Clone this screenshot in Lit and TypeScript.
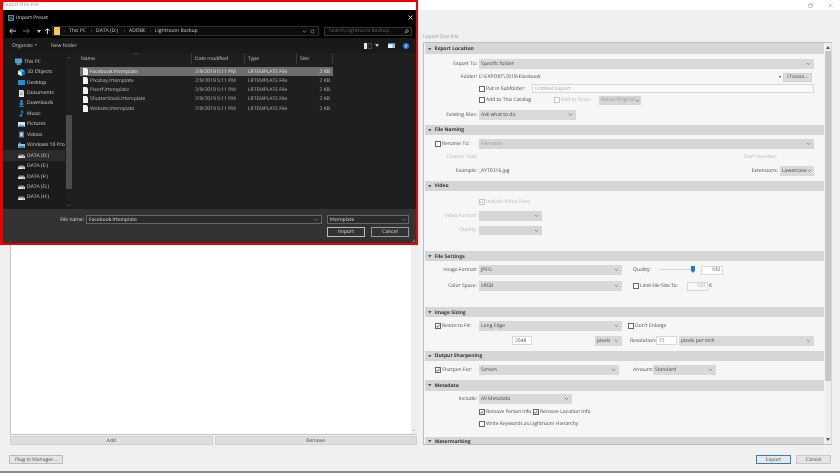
import { LitElement, html, css, svg } from "lit";
import { customElement } from "lit/decorators.js";

const chev = svg`<svg class="chev" viewBox="0 0 6 4"><path d="M1 1l2 2 2-2" fill="none" stroke="currentColor" stroke-width=".8"/></svg>`;
const tick = svg`<svg class="tk" viewBox="0 0 6 6"><path d="M.8 3l1.6 2L5.2 1" fill="none" stroke="currentColor" stroke-width="1.2"/></svg>`;
const tri = svg`<svg class="tri" viewBox="0 0 4 3"><path d="M0 0h4L2 3z" fill="#555"/></svg>`;

const sideIcons: Record<string, unknown> = {
  pc: svg`<rect x="0" y="0.5" width="7" height="4.5" fill="#4aa3df"/><rect x="1.5" y="5.5" width="4" height="1" fill="#cfe6f5"/>`,
  cube: svg`<path d="M3.5 0L7 1.7v3.6L3.5 7 0 5.3V1.7z" fill="#3fb4e8"/><path d="M3.5 3.4L7 1.7v3.6L3.5 7z" fill="#0f6fb4"/><path d="M0 1.7l3.5 1.7V7L0 5.3z" fill="#e6f4fb"/>`,
  desk: svg`<rect x="0" y="1" width="7" height="5" fill="#1f8fe0"/>`,
  doc: svg`<path d="M1 0h4l1 1.2V7H1z" fill="#dfe4e8"/><path d="M2 2.2h3M2 3.4h3M2 4.6h3" stroke="#7a8a96" stroke-width=".5"/>`,
  down: svg`<path d="M2.5 0h2v3.4H6L3.5 6 1 3.4h1.5z" fill="#2b93e6"/><path d="M1 6.5h5" stroke="#2b93e6" stroke-width=".8"/>`,
  music: svg`<path d="M3.4 0.3h.9c.2 1 1 1.4 1.5 2l-.5.4c-.3-.4-.6-.6-1-.8V5.6c0 .8-.7 1.2-1.5 1.2S1.4 6.4 1.4 5.7 2.2 4.6 3.4 4.8z" fill="#2b93e6"/>`,
  pic: svg`<rect x="0" y="1" width="7" height="5" fill="#cde3ee"/><path d="M0 6l2.4-2.6L4 5l1.2-1L7 6z" fill="#3b8fb8"/>`,
  vid: svg`<rect x="1" y="0.5" width="5" height="6" fill="#5677a8"/><rect x="2.3" y="1.6" width="2.4" height="3.8" fill="#c9d6e6"/>`,
  win: svg`<rect x="0" y="2" width="7" height="3.6" fill="#8cc7e6"/><rect x="0.8" y="4" width="5.4" height="1" fill="#2f7fae"/><rect x="0.6" y="0.5" width="2.4" height="1.8" fill="#2b93e6"/>`,
  drive: svg`<path d="M1 2.4h5l1 2H0z" fill="#8f979c"/><rect x="0" y="4.2" width="7" height="1.8" fill="#e6e8ea"/><rect x="5" y="4.8" width="1" height=".6" fill="#555"/>`,
};

const side = [
  ["This PC", "pc", "top"], ["3D Objects", "cube", ""], ["Desktop", "desk", ""], ["Documents", "doc", ""],
  ["Downloads", "down", ""], ["Music", "music", ""], ["Pictures", "pic", ""], ["Videos", "vid", ""],
  ["Windows 10 Pro", "win", ""], ["DATA (D:)", "drive", "sel"], ["DATA (E:)", "drive", ""],
  ["DATA (F:)", "drive", ""], ["DATA (G:)", "drive", ""], ["DATA (H:)", "drive", ""],
];
const files = ["Facebook", "Pixabay", "Pixerf", "ShutterStock", "Website"];

function chevSmall() {
  return html`<svg viewBox="0 0 6 4"><path d="M1 1l2 2 2-2" fill="none" stroke="currentColor" stroke-width=".8"/></svg>`;
}

@customElement("file-dialog")
class FileDialog extends LitElement {
  static styles = css`
    :host { display: flex; flex-direction: column; height: 100%; background: #000; color: #d2d2d2; font: 5px "Open Sans", sans-serif; text-rendering: geometricPrecision; position: relative; }
    svg { display: block; flex: none; }
    .title { height: 14px; display: flex; align-items: center; padding: 1px 3px 0 5px; box-sizing: border-box; gap: 2px; color: #ddd; }
    .title .grow { flex: 1; }
    .app { width: 6px; height: 6px; }
    .x { width: 5px; height: 5px; color: #e8e8e8; }
    .nav { height: 14px; display: flex; align-items: center; padding-left: 6px; }
    .nav .a { width: 7px; height: 6px; margin-right: 7px; color: #eee; }
    .nav .a.dim { color: #777; }
    .nav .a.up { margin-right: 0; }
    .nav .d { width: 4px; height: 3px; margin-right: 3px; color: #ccc; }
    .addr { margin-left: 1px; width: 267px; height: 10px; border: 1px solid #2e2e2e; box-sizing: border-box; display: flex; align-items: center; padding-left: 1px; background: #0c0c0c; }
    .folder { width: 6px; height: 8px; }
    .crumb { display: flex; align-items: center; color: #cfcfcf; white-space: nowrap; }
    .crumb i { font-style: normal; width: 9px; text-align: center; color: #777; font-size: 4.5px; }
    .crumb span { display: block; }
    .c1 { width: 18px; } .c2 { width: 24px; } .c3 { width: 17px; }
    .addr .grow { flex: 1; }
    .addr .small { width: 5px; height: 5px; margin-right: 3px; color: #aaa; }
    .search { margin-left: 5px; width: 88px; height: 9px; box-sizing: border-box; border: 1px solid #333; display: flex; align-items: center; justify-content: space-between; padding: 0 2px 0 4px; color: #666; background: #0c0c0c; }
    .search svg { width: 5px; height: 5px; color: #bbb; }
    .cmd { height: 15px; background: #191919; display: flex; align-items: center; padding: 0 7px 0 9px; color: #c8c8c8; }
    .cmd .org { display: flex; align-items: center; gap: 2px; width: 39px; }
    .cmd .org span { font-size: 3.5px; color: #bbb; }
    .cmd .grow { flex: 1; }
    .cmd .v1 { width: 8px; height: 6px; }
    .cmd .c { width: 4px; height: 3px; margin: 0 9px 0 3px; color: #ccc; }
    .cmd .v2 { width: 7px; height: 5px; margin-right: 8px; }
    .cmd .help { width: 6px; height: 6px; }
    .main { flex: none; height: 156px; display: flex; background: #1f1f1f; }
    .side { width: 62px; background: #1b1b1b; padding-top: 3.5px; box-sizing: border-box; }
    .row { height: 10.45px; display: flex; align-items: center; gap: 2px; padding-left: 15px; white-space: nowrap; overflow: hidden; }
    .row.top { padding-left: 12px; }
    .row.sel { background: #2c2c2c; }
    .row svg { width: 7px; height: 7px; }
    .sb { width: 7px; background: #1d1d1d; position: relative; display: flex; flex-direction: column; align-items: center; }
    .sb .ar { width: 4px; height: 3px; color: #666; margin-top: 3px; }
    .sb .thumb { width: 6px; height: 74px; background: #4b4b4b; margin-top: 56px; }
    .sb .ar2 { margin-top: 15px; }
    .files { flex: 1; padding-left: 8px; position: relative; }
    .grid { display: grid; grid-template-columns: 112px 53px 52px 36px; width: 253px; }
    .head { height: 14px; align-items: start; color: #c8c8c8; }
    .head div { height: 11px; display: flex; align-items: center; padding-left: 3px; border-right: 1px solid #3a3a3a; box-sizing: border-box; }
    .head div:first-child { padding-left: 1px; }
    .sort { position: absolute; left: 62px; top: -1px; width: 4px; height: 3px; color: #777; }
    .file { height: 9.25px; align-items: center; color: #bdbdbd; }
    .file > div { padding-left: 3px; white-space: nowrap; display: flex; align-items: center; gap: 2px; }
    .file svg { width: 5px; height: 7px; }
    .file .sz { justify-content: flex-end; padding: 0 3px 0 0; }
    .file.on { background: #6e6e6e; color: #e4e4e4; }
    .foot { flex: 1; background: #333; padding: 6px 7px 0 0; display: flex; flex-direction: column; gap: 3px; position: relative; }
    .fr { display: flex; align-items: center; height: 9px; }
    .fr label { width: 81px; text-align: right; margin-right: 2px; color: #ddd; }
    .inp { height: 9px; box-sizing: border-box; border: 1px solid #666; background: #2b2b2b; display: flex; align-items: center; padding-left: 2px; color: #ddd; }
    .inp svg { width: 5px; height: 3px; margin-left: auto; margin-right: 2px; color: #999; }
    .i1 { width: 236px; margin-right: 5px; }
    .i2 { width: 82px; }
    .btns { display: flex; justify-content: flex-end; gap: 6px; }
    .btn { width: 38px; height: 10px; box-sizing: border-box; border: 1px solid #bdbdbd; background: #333; color: #ddd; display: flex; align-items: center; justify-content: center; }
    .btn.alt { border-color: #999; }
    .grip { position: absolute; right: 1px; bottom: 1px; width: 3px; height: 3px; color: #777; }
  `;
  render() {
    const fileIcon = html`<svg viewBox="0 0 5 7"><path d="M0 0h3.6L5 1.4V7H0z" fill="#f2f2f2"/></svg>`;
    return html`
      <div class="title">
        <svg class="app" viewBox="0 0 6 6"><rect x=".4" y=".4" width="5.2" height="5.2" fill="#14303f" stroke="#7fb7d6" stroke-width=".7"/><path d="M1.5 4.4L3 2.6l1.5 1.8" fill="none" stroke="#9fd0ea" stroke-width=".5"/></svg>
        <span>Import Preset</span><span class="grow"></span>
        <svg class="x" viewBox="0 0 5 5"><path d="M.5.5l4 4m0-4l-4 4" stroke="currentColor" stroke-width=".9"/></svg>
      </div>
      <div class="nav">
        <svg class="a" viewBox="0 0 7 6"><path d="M7 3H1m2-2.4L.8 3 3 5.4" fill="none" stroke="currentColor" stroke-width=".9"/></svg>
        <svg class="a dim" viewBox="0 0 7 6"><path d="M0 3h6M4 .6L6.2 3 4 5.4" fill="none" stroke="currentColor" stroke-width=".9"/></svg>
        <svg class="d" viewBox="0 0 4 3"><path d="M0 0h4L2 3z" fill="currentColor"/></svg>
        <svg class="a up" viewBox="0 0 7 6"><path d="M3.5 6V1M1.2 3l2.3-2.4L5.8 3" fill="none" stroke="currentColor" stroke-width=".9"/></svg>
        <div class="addr">
          <svg class="folder" viewBox="0 0 6 8"><path d="M0 0h6v8H0z" fill="#f5c94c"/></svg>
          <span class="crumb"><i>›</i><span class="c1">This PC</span><i>›</i><span class="c2">DATA (D:)</span><i>›</i><span class="c3">ADOBE</span><i>›</i><span>Lightroom Backup</span></span>
          <span class="grow"></span>
          <svg class="small" viewBox="0 0 6 4"><path d="M1 1l2 2 2-2" fill="none" stroke="currentColor" stroke-width=".8"/></svg>
          <svg class="small" viewBox="0 0 6 6"><path d="M5 3a2 2 0 1 1-.7-1.5M4.6.6v1.2H3.4" fill="none" stroke="currentColor" stroke-width=".6"/></svg>
        </div>
        <div class="search"><span>Search Lightroom Backup</span>
          <svg viewBox="0 0 6 6"><circle cx="3.6" cy="2.4" r="1.6" fill="none" stroke="currentColor" stroke-width=".7"/><path d="M2.4 3.6L.6 5.4" stroke="currentColor" stroke-width=".8"/></svg></div>
      </div>
      <div class="cmd">
        <span class="org">Organize <span>▾</span></span><span>New folder</span><span class="grow"></span>
        <svg class="v1" viewBox="0 0 8 6"><rect width="3" height="6" fill="#e8e8e8"/><rect x="4" y=".5" width="3.5" height="5" fill="none" stroke="#666" stroke-width=".6"/></svg>
        <svg class="c" viewBox="0 0 4 3"><path d="M0 0h4L2 3z" fill="currentColor"/></svg>
        <svg class="v2" viewBox="0 0 7 5"><rect width="7" height="5" fill="#e8f2fa"/><rect width="7" height="1.2" fill="#3c8ed0"/><rect x="4.3" y="1.2" width="2.7" height="3.8" fill="#8fc0e8"/></svg>
        <svg class="help" viewBox="0 0 6 6"><circle cx="3" cy="3" r="3" fill="#1c7ee0"/><text x="3" y="4.6" font-size="4.4" font-family="Open Sans" font-weight="700" text-anchor="middle" fill="#fff">?</text></svg>
      </div>
      <div class="main">
        <div class="side">
          ${side.map(([n, ic, c]) => html`<div class="row ${c}"><svg viewBox="0 0 7 7">${sideIcons[ic]}</svg><span>${n}</span></div>`)}
        </div>
        <div class="sb">
          <svg class="ar" viewBox="0 0 4 3"><path d="M.5 2.5L2 1l1.5 1.5" fill="none" stroke="currentColor" stroke-width=".7"/></svg>
          <div class="thumb"></div>
          <svg class="ar ar2" viewBox="0 0 4 3"><path d="M.5.5L2 2 3.5.5" fill="none" stroke="currentColor" stroke-width=".7"/></svg>
        </div>
        <div class="files">
          <svg class="sort" viewBox="0 0 4 3"><path d="M.5 2.5L2 1l1.5 1.5" fill="none" stroke="currentColor" stroke-width=".6"/></svg>
          <div class="grid head"><div>Name</div><div>Date modified</div><div>Type</div><div>Size</div></div>
          ${files.map((f, i) => html`<div class="grid file ${i === 0 ? "on" : ""}">
            <div>${fileIcon}<span>${f}.lrtemplate</span></div><div>2/9/2019 5:11 PM</div><div>LRTEMPLATE File</div><div class="sz">2 KB</div></div>`)}
        </div>
      </div>
      <div class="foot">
        <div class="fr"><label>File name:</label>
          <div class="inp i1">Facebook.lrtemplate${chevSmall()}</div>
          <div class="inp i2">lrtemplate${chevSmall()}</div></div>
        <div class="btns"><div class="btn">Import</div><div class="btn alt">Cancel</div></div>
        <svg class="grip" viewBox="0 0 3 3"><path d="M3 0v3H0z" fill="currentColor"/></svg>
      </div>`;
  }
}

@customElement("app-root")
class AppRoot extends LitElement {
  static styles = css`
    :host { display: block; width: 840px; height: 473px; }
    .page { width: 840px; height: 473px; position: relative; overflow: hidden; display: flex; flex-direction: column; background: #f0f0f0; color: #4a4a4a; font: 5px "Open Sans", sans-serif; text-rendering: geometricPrecision; filter: blur(.3px); }
    svg { display: block; flex: none; }
    .bar { height: 10px; background: #fff; display: flex; align-items: center; padding: 0 7px 0 3px; color: #999; flex: none; }
    .bar .grow { flex: 1; }
    .bar svg { width: 5px; height: 5px; margin-left: 15px; color: #999; }
    .body { flex: 1; display: flex; min-height: 0; }
    .left { width: 423px; flex: none; box-sizing: border-box; padding: 30px 6px 0 10px; display: flex; flex-direction: column; }
    .list { height: 394px; flex: none; display: flex; background: #fff; border-left: 1px solid #c4c4c4; border-bottom: 1px solid #c4c4c4; }
    .list .in { flex: 1; }
    .list .lsb { width: 6px; background: #ededed; display: flex; flex-direction: column; justify-content: flex-end; align-items: center; padding-bottom: 2px; color: #aaa; }
    .list .lsb svg { width: 4px; height: 3px; }
    .ar { display: flex; gap: 2px; margin-top: 1px; }
    .ar div { flex: 1; height: 9px; background: #dedede; border: 1px solid #d0d0d0; box-sizing: border-box; display: flex; align-items: center; justify-content: center; color: #444; }
    .plug { margin: 10px 0 0 -1px; width: 54px; height: 9px; box-sizing: border-box; border: 1px solid #bcbcbc; background: #e4e4e4; display: flex; align-items: center; justify-content: center; }
    .right { flex: 1; display: flex; flex-direction: column; padding-right: 8px; }
    .cap { height: 32px; box-sizing: border-box; padding-top: 24px; color: #999; white-space: nowrap; }
    .panel { height: 403px; flex: none; box-sizing: border-box; border: 1px solid #bdbdbd; border-right-color: #d6d6d6; display: flex; background: #f6f6f6; overflow: hidden; }
    .content { width: 399px; flex: none; margin-left: 1px; }
    .vsb { flex: 1; margin-left: 1px; display: flex; flex-direction: column; align-items: center; background: #eeeeee; color: #555; }
    .vsb svg { width: 4px; height: 3px; margin-top: 3px; }
    .vsb .th { width: 100%; height: 330px; background: #c6c6c6; margin-top: 2px; }
    .vsb .g { flex: 1; }
    .vsb .last { margin: 0 0 3px; }
    .hd { height: 11px; box-sizing: border-box; padding: 1px 0 0 3px; background: #d6d6d6; display: flex; align-items: center; gap: 3px; font-weight: 700; color: #333; margin-top: 5px; }
    .hd.first { margin-top: 0; }
    .hd.n10 { height: 10px; }
    .hd.n9 { height: 9px; }
    .hd .tri { width: 3.5px; height: 2.6px; }
    .r { display: flex; align-items: center; height: 9.5px; padding-right: 10px; white-space: nowrap; }
    .h10 { height: 10px; }
    .m2 { margin-top: 2px; } .m3 { margin-top: 3px; } .m4 { margin-top: 4px; } .m5 { margin-top: 5px; } .m6 { margin-top: 6px; } .m7 { margin-top: 7px; } .m8 { margin-top: 8px; } .m16 { margin-top: 16px; }
    .lb { width: 52px; flex: none; margin-right: 2px; text-align: right; }
    .lb.cl { box-sizing: border-box; padding-left: 10px; }
    .dim { color: #b8b8b8; }
    .sel { height: 100%; box-sizing: border-box; background: #d9d9d9; display: flex; align-items: center; padding: 0 2px; color: #444; flex: none; }
    .sel .chev { width: 5px; height: 3.4px; margin-left: auto; margin-right: 1px; color: #666; }
    .sel.off { color: #9a9a9a; background: #d6d6d6; }
    .fill { flex: 1; }
    .w335 { width: 335px; } .w97 { width: 97px; } .w34 { width: 34px; } .w63 { width: 63px; } .w143 { width: 143px; }
    .w27 { width: 27px; } .w135 { width: 135px; } .w140 { width: 140px; } .w93 { width: 93px; } .w42 { width: 42px; }
    .tb { height: 9px; box-sizing: border-box; background: #fff; border: 1px solid #d8d8d8; display: flex; align-items: center; padding: 0 2px; color: #555; flex: none; }
    .tb.fill { flex: 1; }
    .tb.end { justify-content: flex-end; }
    .tb.g { color: #aaa; background: #f9f9f9; }
    .tb20 { width: 20px; } .tb21 { width: 21px; } .tb22 { width: 22px; }
    .ck { width: 6px; height: 6px; box-sizing: border-box; border: .7px solid #666; background: #fff; color: #444; flex: none; display: inline-block; }
    .ck.off { border-color: #c6c6c6; color: #aaa; }
    .ck .tk { width: 100%; height: 100%; }
    .cl { display: flex; align-items: center; gap: 1px; flex: none; }
    .cw53 { width: 53px; } .cw54 { width: 54px; letter-spacing: -.1px; } .cw75 { width: 75px; } .cw45 { width: 45px; }
    .ml6 { margin-left: 6px; } .ml11 { margin-left: 11px; }
    .choose { width: 29px; height: 9px; background: #dcdcdc; border: 1px solid #cfcfcf; box-sizing: border-box; display: flex; align-items: center; justify-content: center; margin-right: 2px; flex: none; }
    .dd { font-size: 4px; margin-right: 2px; color: #333; }
    .foot { flex: 1; display: flex; justify-content: flex-end; gap: 5px; padding: 10px 1px 0 0; }
    .fb { width: 35px; height: 9px; box-sizing: border-box; border: 1px solid #c8c8c8; background: #e4e4e4; display: flex; align-items: center; justify-content: center; }
    .fb.pri { border-color: #2f7fd0; background: #e8e8e8; }
    .line { height: 2px; background: #8b8b8b; flex: none; }
    .startno { margin-right: 37px; }
    .ext { margin-right: 2px; }
    .qlabel { margin-left: 11px; width: 18px; }
    .slider { width: 38px; margin: 0 4px 0 8px; height: 9px; position: relative; flex: none; }
    .slider::before { content: ""; position: absolute; left: 0; right: 3px; top: 3.5px; height: 1px; background: #d2d2d2; }
    .knob { position: absolute; right: 2px; top: 0; width: 4px; height: 7px; }
    .k { margin-left: 1px; }
    .sp33 { width: 33px; } .sp63 { width: 63px; } .sp2 { width: 2px; }
    .reslabel { margin-left: 8px; width: 26px; }
    .amlabel { margin-left: 14px; width: 20px; }
    .frame { position: absolute; left: 0; top: 0; width: 418px; height: 245px; box-sizing: border-box; border: solid #f10000; border-width: 2px 2px 2px 3px; padding-top: 8px; }
    .frame file-dialog { height: 233px; }
  `;
  ck(on = false, off = false) {
    return html`<span class="ck ${off ? "off" : ""}">${on ? tick : ""}</span>`;
  }
  sel(t: string, w: string, off = false) {
    return html`<span class="sel ${w} ${off ? "off" : ""}"><span>${t}</span>${chev}</span>`;
  }
  hd(t: string, c = "") {
    return html`<div class="hd ${c}">${tri}<span>${t}</span></div>`;
  }
  lbl(t: string) {
    return html`<span class="lb">${t}</span>`;
  }
  render() {
    return html`<div class="page">
      <div class="bar"><span>Export One File</span><span class="grow"></span>
        <svg viewBox="0 0 5 5"><path d="M.5 1.5h3v3h-3zM1.5 1.5v-1h3v3h-1" fill="none" stroke="currentColor" stroke-width=".5"/></svg>
        <svg viewBox="0 0 5 5"><path d="M.5.5l4 4m0-4l-4 4" stroke="currentColor" stroke-width=".5"/></svg>
      </div>
      <div class="body">
        <div class="left">
          <div class="list"><div class="in"></div><div class="lsb"><svg viewBox="0 0 4 3"><path d="M.5.5L2 2 3.5.5" fill="none" stroke="currentColor" stroke-width=".6"/></svg></div></div>
          <div class="ar"><div>Add</div><div>Remove</div></div>
          <div class="plug">Plug-in Manager...</div>
        </div>
        <div class="right">
          <div class="cap">Export One File</div>
          <div class="panel">
            <div class="content">
              ${this.hd("Export Location", "first")}
              <div class="r m5">${this.lbl("Export To:")}${this.sel("Specific folder", "w335")}</div>
              <div class="r m4"><span class="lb">Folder:</span><span>E:\\EXPORT\\2019\\Facebook</span><span class="fill"></span><span class="dd">▾</span><span class="choose">Choose...</span></div>
              <div class="r m2"><span class="lb"></span><span class="cl cw53">${this.ck()}Put in Subfolder:</span><span class="tb g fill">Untitled Export</span></div>
              <div class="r m2"><span class="lb"></span><span class="cl cw75">${this.ck()}Add to This Catalog</span><span class="cl dim cw45">${this.ck(false, true)}Add to Stack:</span>${this.sel("Below Original", "w42", true)}</div>
              <div class="r m5">${this.lbl("Existing Files:")}${this.sel("Ask what to do", "w97")}</div>
              ${this.hd("File Naming", "n10")}
              <div class="r h10 m4"><span class="lb cl">${this.ck()}Rename To:</span>${this.sel("Filename", "w335", true)}</div>
              <div class="r h10 m3"><span class="lb dim">Custom Text:</span><span class="fill"></span><span class="dim startno">Start Number:</span></div>
              <div class="r h10 m4"><span class="lb">Example:</span><span>_KYT0316.jpg</span><span class="fill"></span><span class="ext">Extensions:</span>${this.sel("Lowercase", "w34")}</div>
              ${this.hd("Video", "n10")}
              <div class="r m7"><span class="lb"></span><span class="cl dim">${this.ck(true, true)}Include Video Files:</span></div>
              <div class="r m4"><span class="lb dim">Video Format:</span>${this.sel("", "w63", true)}</div>
              <div class="r m5"><span class="lb dim">Quality:</span>${this.sel("", "w63", true)}</div>
              ${this.hd("File Settings", "n10 m16")}
              <div class="r h10 m4">${this.lbl("Image Format:")}${this.sel("JPEG", "w143")}<span class="qlabel">Quality:</span>
                <span class="slider"><svg class="knob" viewBox="0 0 4 7"><path d="M0 0h4v4.5L2 7 0 4.5z" fill="#1f78d8"/></svg></span><span class="tb end tb22">100</span></div>
              <div class="r h10 m6">${this.lbl("Color Space:")}${this.sel("sRGB", "w143")}<span class="cl ml11 cw54">${this.ck()}Limit File Size To:</span><span class="tb g end tb21">100</span><span class="k">K</span></div>
              ${this.hd("Image Sizing", "n10 m16")}
              <div class="r h10 m4"><span class="lb cl">${this.ck(true)}Resize to Fit:</span>${this.sel("Long Edge", "w143")}<span class="cl ml6">${this.ck()}Don't Enlarge</span></div>
              <div class="r m5"><span class="lb"></span><span class="sp33"></span><span class="tb tb20">2048</span><span class="sp63"></span>${this.sel("pixels", "w27")}<span class="reslabel">Resolution:</span><span class="tb tb21">72</span><span class="sp2"></span>${this.sel("pixels per inch", "w135")}</div>
              ${this.hd("Output Sharpening", "n10")}
              <div class="r h10 m4"><span class="lb cl">${this.ck(true)}Sharpen For:</span>${this.sel("Screen", "w140")}<span class="amlabel">Amount:</span>${this.sel("Standard", "w63")}</div>
              ${this.hd("Metadata")}
              <div class="r h10 m3">${this.lbl("Include:")}${this.sel("All Metadata", "w93")}</div>
              <div class="r m4"><span class="lb"></span><span class="cl cw54">${this.ck(true)}Remove Person Info</span><span class="cl">${this.ck(true)}Remove Location Info</span></div>
              <div class="r m2"><span class="lb"></span><span class="cl">${this.ck()}Write Keywords as Lightroom Hierarchy</span></div>
              ${this.hd("Watermarking", "n9 m8")}
            </div>
            <div class="vsb">
              <svg viewBox="0 0 4 3"><path d="M0 3h4L2 0z" fill="currentColor"/></svg>
              <div class="th"></div><div class="g"></div>
              <svg class="last" viewBox="0 0 4 3"><path d="M0 0h4L2 3z" fill="currentColor"/></svg>
            </div>
          </div>
          <div class="foot"><div class="fb pri">Export</div><div class="fb">Cancel</div></div>
        </div>
      </div>
      <div class="line"></div>
      <div class="frame"><file-dialog></file-dialog></div>
    </div>`;
  }
}
